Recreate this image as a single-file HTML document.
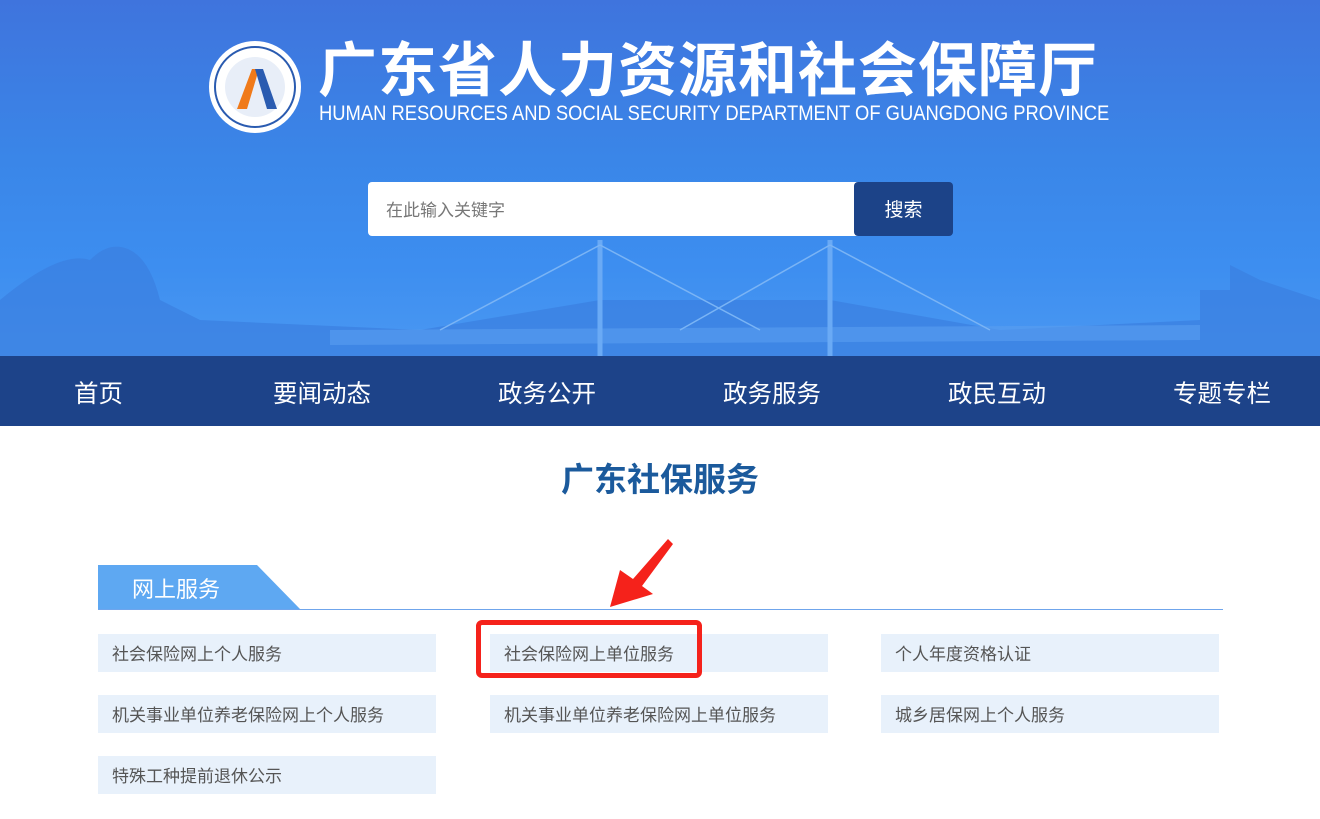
<!DOCTYPE html>
<html><head><meta charset="utf-8"><style>
*{margin:0;padding:0;box-sizing:border-box}
body{width:1320px;height:819px;overflow:hidden;background:#fff;font-family:"Liberation Sans","Noto Sans CJK SC",sans-serif;position:relative}
.banner{position:absolute;left:0;top:0;width:1320px;height:356px;background:linear-gradient(180deg,#3f74dd 0%,#3a86e8 45%,#3d8ef0 75%,#4a98f2 100%);overflow:hidden}
.nav{position:absolute;top:356px;left:0;width:1320px;height:70px;background:#1d4389}
.nav span{position:absolute;top:19px;color:#fff;font-size:24.5px;font-family:"Noto Sans CJK SC",sans-serif}
.t{position:absolute;color:#fff}
.item{position:absolute;height:38px;background:#e8f1fb;color:#555;font-size:17px;line-height:38px;padding-left:14px;font-family:"Noto Sans CJK SC",sans-serif;width:338px}
</style></head><body>
<div class="banner">
<svg width="1320" height="356" style="position:absolute;left:0;top:0">
<path d="M0 356 L0 300 Q60 250 90 260 Q110 240 130 250 Q150 260 160 300 L200 320 L420 330 L600 300 L830 300 L1000 330 L1200 320 L1200 290 L1230 290 L1230 265 L1260 280 L1290 290 L1320 300 L1320 356Z" fill="#3b7fe0" opacity=".7"/>
<path d="M330 330 L1200 325 L1200 340 L330 345Z" fill="#5a9ef0" opacity=".6"/>
<line x1="600" y1="240" x2="600" y2="356" stroke="#6aaaf5" stroke-width="5"/>
<line x1="830" y1="240" x2="830" y2="356" stroke="#6aaaf5" stroke-width="5"/>
<path d="M600 245 L440 330 M600 245 L760 330 M830 245 L680 330 M830 245 L990 330" stroke="#7ab4f5" stroke-width="1.5" fill="none"/>
</svg>
<svg width="96" height="96" viewBox="0 0 96 96" style="position:absolute;left:207px;top:39px">
<circle cx="48" cy="48" r="46" fill="#fff"/><circle cx="48" cy="48" r="40" fill="none" stroke="#2a5bb0" stroke-width="2"/>
<circle cx="48" cy="48" r="30" fill="#e8eef8"/>
<path d="M30 70 L45 30 L52 30 L40 70Z" fill="#f07a1a"/><path d="M48 30 L56 30 L70 70 L60 70Z" fill="#2a5bb0"/>
</svg>
<div class="t" style="left:318px;top:30px;font-size:59px;font-weight:bold;letter-spacing:1px;font-family:'Noto Sans CJK SC',sans-serif;line-height:72px">广东省人力资源和社会保障厅</div>
<div class="t" style="left:319px;top:102px;font-size:21px;line-height:24px;transform:scaleX(0.875);transform-origin:0 0;white-space:nowrap">HUMAN RESOURCES AND SOCIAL SECURITY DEPARTMENT OF GUANGDONG PROVINCE</div>
<div style="position:absolute;left:368px;top:182px;width:490px;height:54px;background:#fff;border-radius:4px 0 0 4px;color:#777;font-size:17px;line-height:54px;padding-left:18px;font-family:'Noto Sans CJK SC',sans-serif">在此输入关键字</div>
<div style="position:absolute;left:854px;top:182px;width:99px;height:54px;background:#1c4388;border-radius:4px;color:#fff;font-size:19px;line-height:54px;text-align:center;font-family:'Noto Sans CJK SC',sans-serif">搜索</div>
</div>
<div class="nav">
<span style="left:74px">首页</span><span style="left:273px">要闻动态</span><span style="left:498px">政务公开</span><span style="left:723px">政务服务</span><span style="left:948px">政民互动</span><span style="left:1173px">专题专栏</span>
</div>
<div style="position:absolute;left:0;width:1320px;top:453px;text-align:center;color:#1b5a9c;font-size:33px;font-weight:bold;font-family:'Noto Sans CJK SC',sans-serif">广东社保服务</div>
<svg width="1320" height="100" style="position:absolute;left:0;top:530px">
<polygon points="98,35 257,35 300,79 98,79" fill="#5ea8f2"/>
<line x1="98" y1="79.5" x2="1223" y2="79.5" stroke="#6fa5ec" stroke-width="1"/>
<polygon points="610,77 620,40 633,49 668,9 673,14 642,56 653,64" fill="#f5221b"/>
</svg>
<div style="position:absolute;left:132px;top:572px;color:#fff;font-size:22px;font-family:'Noto Sans CJK SC',sans-serif">网上服务</div>
<div class="item" style="left:98px;top:634px">社会保险网上个人服务</div>
<div class="item" style="left:490px;top:634px">社会保险网上单位服务</div>
<div class="item" style="left:881px;top:634px">个人年度资格认证</div>
<div class="item" style="left:98px;top:695px">机关事业单位养老保险网上个人服务</div>
<div class="item" style="left:490px;top:695px">机关事业单位养老保险网上单位服务</div>
<div class="item" style="left:881px;top:695px">城乡居保网上个人服务</div>
<div class="item" style="left:98px;top:756px">特殊工种提前退休公示</div>
<div style="position:absolute;left:476px;top:620px;width:226px;height:58px;border:5px solid #f5221b;border-radius:6px"></div>
</body></html>
